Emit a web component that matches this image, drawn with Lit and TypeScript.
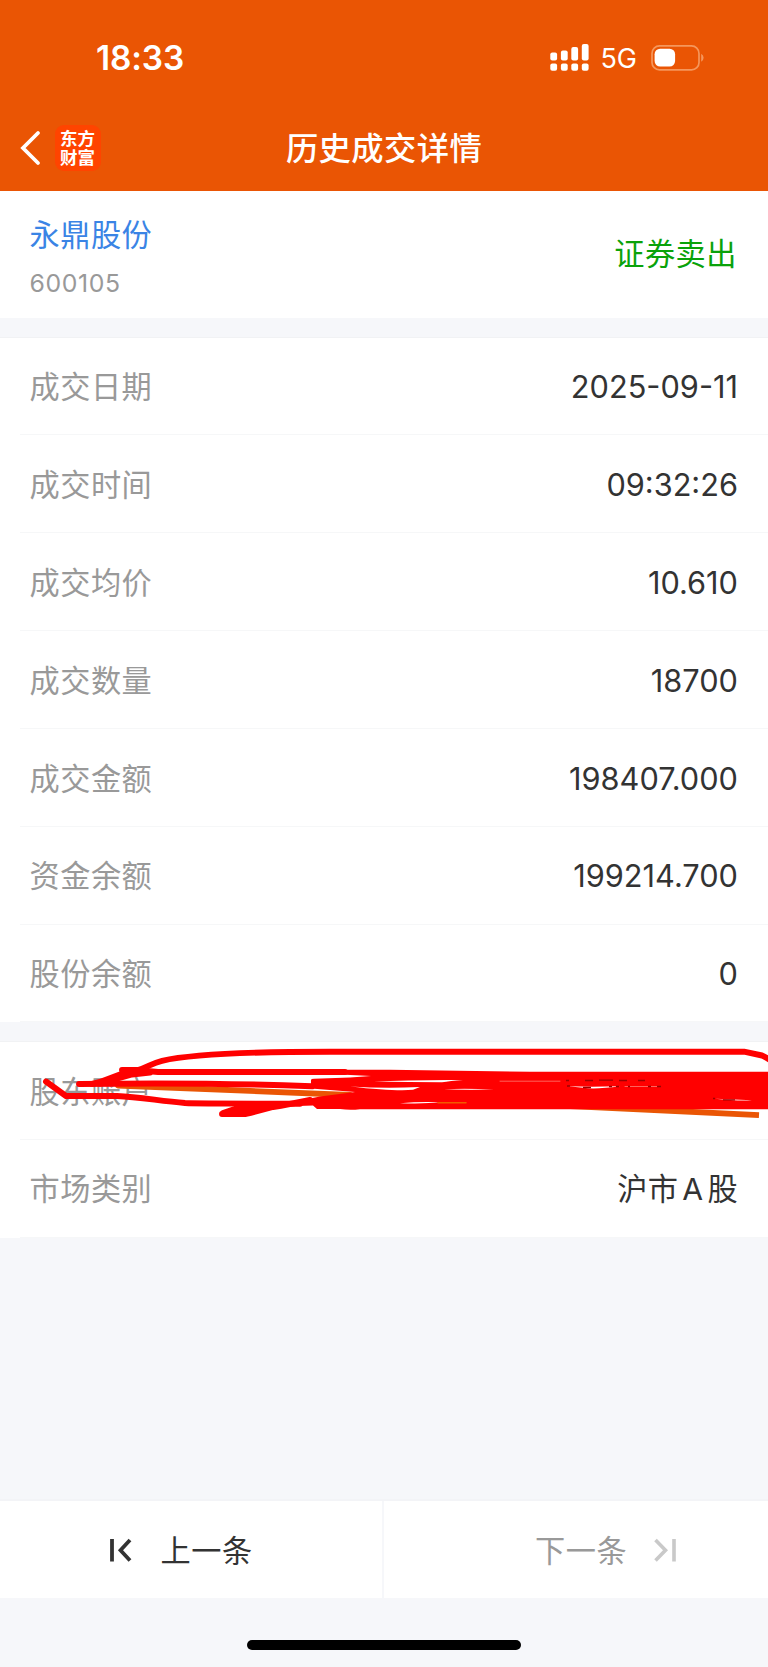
import { LitElement, html, css, svg } from "lit";
import { customElement, property } from "lit/decorators.js";

const FONT = css`Inter, "Noto Sans CJK SC", sans-serif`;

@customElement("status-bar")
class StatusBar extends LitElement {
  static styles = css`
    :host { display: flex; justify-content: space-between; align-items: center; height: 48px; padding: 34px 64px 0 96px; color: #fff; font-family: ${FONT}; }
    .time { font-size: 33.4px; font-weight: 600; line-height: 48px; letter-spacing: -0.1px; }
    .right { display: flex; align-items: center; }
    .net { font-size: 27px; line-height: 48px; margin: 1px 14px 0 11px; }
    svg { display: block; }
  `;
  render() {
    const bars = [
      [0, 11.5, 8],
      [10.6, 9.5, 10],
      [21, 6, 13.5],
      [31.5, 3, 16.5],
    ];
    return html`
      <span class="time">18:33</span>
      <div class="right">
        <svg width="39" height="34" viewBox="0 0 39 34" fill="#fff">
          ${bars.map(([x, y, h]) => svg`
            <rect x=${x + 0.3} y=${y} width="6.8" height=${h} rx="2"></rect>
            <rect x=${x + 0.3} y="22.5" width="6.8" height="7.2" rx="2"></rect>`)}
        </svg>
        <span class="net">5G</span>
        <svg width="53" height="27" viewBox="0 0 53 27">
          <rect x="1" y="0.900" width="47" height="24" rx="7.5" fill="none" stroke="#f5975c" stroke-width="1.7"></rect>
          <rect x="3.6" y="3.7" width="20.5" height="17.8" rx="5.5" fill="#fff"></rect>
          <path d="M50.200 8.800q2.400 1.400 2.400 4t-2.400 4z" fill="#f5975c"></path>
        </svg>
      </div>
    `;
  }
}

@customElement("detail-row")
class DetailRow extends LitElement {
  @property() label = "";
  @property() value = "";
  static styles = css`
    :host { display: block; padding-left: 20px; background: #fff; font-family: ${FONT}; font-size: 30.72px; }
    .row { display: flex; justify-content: space-between; align-items: center; box-sizing: border-box; height: 97.85px; padding: 0 30px 0 9.5px; border-bottom: 1.5px solid #f6f7f8; }
    .label { color: #999; font-size: 30.2px; letter-spacing: 0.5px; padding-bottom: 1.5px; }
    .value { color: #333; white-space: pre; padding-top: 1.5px; }
    .value.cjk { font-size: 30.2px; letter-spacing: 0.4px; word-spacing: -5px; padding: 0 0 2px; }
  `;
  render() {
    const cjk = /[\u4e00-\u9fff]/.test(this.value) ? "cjk" : "";
    return html`<div class="row"><span class="label">${this.label}</span><span class="value ${cjk}">${this.value}</span></div>`;
  }
}

@customElement("app-root")
class AppRoot extends LitElement {
  static styles = css`
    :host { display: flex; flex-direction: column; height: 1667px; background: #f6f7fa; font-family: ${FONT}; overflow: hidden; }
    .top { background: #ea5504; height: 191px; }
    .nav { display: grid; grid-template-columns: 1fr auto 1fr; align-items: center; height: 109px; padding: 22px 20px 0 20px; box-sizing: border-box; }
    .back { display: flex; align-items: center; gap: 14px; }
    .back svg { display: block; }
    .logo { box-sizing: border-box; width: 46px; height: 46px; border-radius: 9px; background: #ff4400; color: #fff; font: 700 17.5px/19px "Noto Sans CJK SC", sans-serif; padding: 3px 5px; }
    .title { color: #fff; font-size: 32.3px; letter-spacing: 0.4px; font-weight: 500; padding-bottom: 4px; }
    .stock { display: flex; justify-content: space-between; background: #fff; height: 127px; padding: 0 31px 0 29.5px; }
    .name { color: #3a84e5; font-size: 30.2px; letter-spacing: 0.5px; line-height: 46px; margin-top: 20.5px; }
    .code { color: #999; font-size: 24.8px; letter-spacing: 0.6px; line-height: 32px; margin-top: 9.5px; }
    .side { color: #0aa20a; font-size: 30.2px; letter-spacing: 0.5px; line-height: 127px; }
    .gap { height: 18.5px; border-bottom: 1.5px solid #f1f2f4; }
    .account { position: relative; }
    .scribble { position: absolute; left: 0; top: 0; pointer-events: none; }
    .pager { display: grid; grid-template-columns: 1fr 1fr; height: 97px; margin-top: auto; background: #fff; border-top: 2px solid #f3f4f7; font-size: 30.2px; letter-spacing: 0.5px; }
    .prev, .next { display: flex; align-items: center; }
    .prev span, .next span { padding-bottom: 1px; }
    .prev { color: #333; padding-left: 108.5px; gap: 28px; border-right: 2px solid #f6f7fa; }
    .next { color: #999; padding-left: 151px; gap: 26px; }
    .home { display: flex; justify-content: center; height: 27px; padding-top: 42px; }
    .pill { width: 274px; height: 10px; border-radius: 5px; background: #000; }
  `;

  render() {
    const rows = [
      ["成交日期", "2025-09-11"],
      ["成交时间", "09:32:26"],
      ["成交均价", "10.610"],
      ["成交数量", "18700"],
      ["成交金额", "198407.000"],
      ["资金余额", "199214.700"],
      ["股份余额", "0"],
    ];
    return html`
      <div class="top">
        <status-bar></status-bar>
        <div class="nav">
          <div class="back">
            <svg width="21" height="36" viewBox="0 0 21 36"><path d="M18 3 3 18 18 33" fill="none" stroke="#fff" stroke-width="3.8" stroke-linecap="round"></path></svg>
            <div class="logo">东方财富</div>
          </div>
          <div class="title">历史成交详情</div>
        </div>
      </div>
      <div class="stock">
        <div><div class="name">永鼎股份</div><div class="code">600105</div></div>
        <div class="side">证券卖出</div>
      </div>
      <div class="gap"></div>
      ${rows.map(([l, v]) => html`<detail-row .label=${l} .value=${v}></detail-row>`)}
      <div class="gap"></div>
      <div class="account">
        <detail-row label="股东账户"></detail-row>
        <detail-row label="市场类别" value="沪市 A 股"></detail-row>
        <svg class="scribble" width="768" height="90" viewBox="0 1042 768 90" fill="none" stroke-linecap="round" stroke-linejoin="round">
          <path d="M118 1085.500 L180 1088 L350 1095" stroke="#ea5504" stroke-width="5.8"></path>
          <path d="M560 1105.500 L759 1115.200" stroke="#ea5504" stroke-width="5.800" stroke-linecap="butt"></path>
          <path d="M311 1080 Q311 1078.700 314 1078.700 L350 1077.500 371 1076 L340 1074.500 V1069.700 H390 L530 1071.700 H768 V1109.200 H360 Q350 1110.500 340 1109 L317 1109 L313 1105.500 L270 1107 V1102 L297 1101 L320 1096.500 355 1092 L311 1088.500Z" fill="#f00"></path>
          <g stroke="#f00" stroke-width="5.900">
            <path d="M46 1081.500 L66 1096 H117 C140 1097 160 1101 185 1103 Q200 1103.700 300 1103.700"></path>
            <path d="M79 1084 C150 1083 240 1083.500 312 1086.300"></path>
            <path d="M92 1084 C110 1080 118 1073 138 1070 C148 1067 152 1063 162 1060.800 C190 1054.500 260 1051.700 330 1051.700 H744 L762 1055.500 Q768 1058 772 1062"></path>
            <path d="M122 1070 H136 L158 1072 H345"></path>
            <path d="M100 1083.500 L132 1074.500 150 1072.500"></path>
            <path d="M222 1114 H246 Q262 1110 273 1107 Q288 1104.500 310 1100 M223 1113 L242 1106.500 H270 M236 1112 L262 1107.500"></path>
          </g>
          <g fill="#fff">
            <path d="M374 1081.600 Q410 1079.700 463 1080 Q450 1081 442 1082.300 Q410 1082 374 1081.600Z"></path>
            <path d="M350 1086.500 Q385 1088.800 420 1087 L413 1089.800 Q395 1091.500 350 1086.500Z"></path>
            <path d="M444 1089.300 Q465 1088 494 1089.600 Q465 1090.300 444 1089.300Z" opacity=".8"></path>
            <path d="M400 1103.200 Q420 1101.500 440 1102.300 Q425 1104 400 1103.200Z"></path>
            <path d="M568 1086.300 Q590 1087 620 1086.300 Q600 1089 588 1088.300Z"></path>
            <path d="M715 1098.800 Q735 1099.500 752 1100.200 Q740 1101.400 715 1098.800Z"></path>
          </g>
          <path d="M438 1102.800 H466" stroke="#f25a00" stroke-width="1.500"></path>
          <path d="M500 1081.200 H560 M625 1086.500 H660" stroke="#ff7a72" stroke-width=".8"></path>
          <g stroke="#9c0000" stroke-width="1.300" stroke-linecap="butt">
            <path d="M566 1080.500h3M585 1080.500h8M599 1080.200h14M619 1080.500h8M638 1080.500h7M567 1086h3M583 1087.500h8M609 1086.500h3M616 1086.500h3M628 1086.500h2M648 1086.500h3M657 1086.500h4M713 1098.500h2M723 1099.800h12"></path>
          </g>
        </svg>
      </div>
      <div class="pager">
        <div class="prev">
          <svg width="24" height="26" viewBox="0 0 24 26" fill="none" stroke="#333" stroke-width="3.8"><path d="M3 2v22.500M21 3 11.500 13.200 21 23.500"></path></svg>
          <span>上一条</span>
        </div>
        <div class="next">
          <span>下一条</span>
          <svg width="24" height="26" viewBox="0 0 24 26" fill="none" stroke="#c9c9c9" stroke-width="3.6"><path d="M21 2v22.500M2.500 3 12.500 13.200 2.500 23.500"></path></svg>
        </div>
      </div>
      <div class="home"><div class="pill"></div></div>
    `;
  }
}
